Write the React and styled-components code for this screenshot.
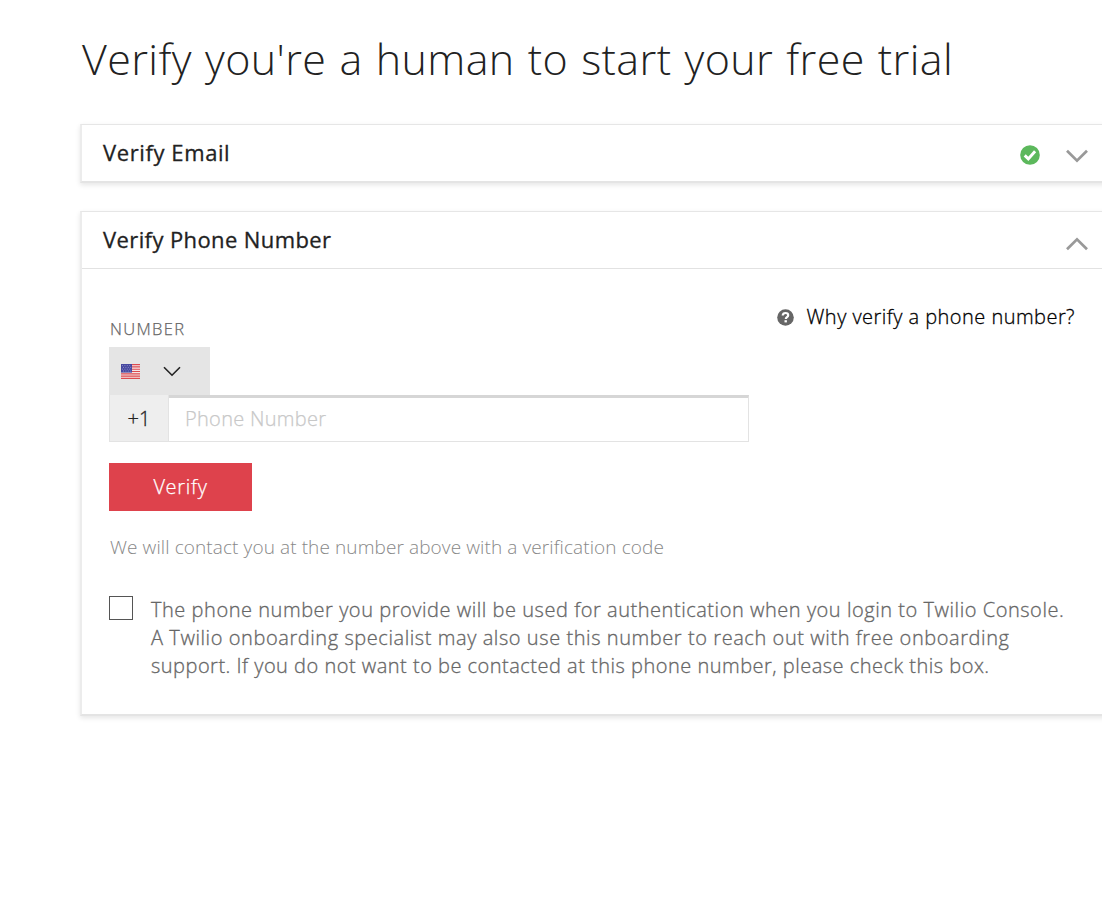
import React from "react";
import styled, { createGlobalStyle } from "styled-components";

const GlobalStyle = createGlobalStyle`
  * { box-sizing: border-box; }
  html, body { margin: 0; background: #fff; }
  body { font-family: "Open Sans", "Noto Sans", sans-serif; overflow: hidden; }
`;

const Page = styled.main`
  width: 1102px;
  height: 913px;
  padding: 29px 0 0 80px;
  overflow: hidden;
`;

const Title = styled.h1`
  margin: 0 0 35px 2px;
  height: 60px;
  font-size: 43px;
  line-height: 60px;
  font-weight: 300;
  letter-spacing: 0.4px;
  word-spacing: 1.5px;
  color: #222;
  white-space: nowrap;
`;

const Card = styled.section`
  width: 1050px;
  margin-bottom: 28px;
  border: 1px solid #e6e6e6;
  border-left-width: 2px;
  border-left-color: #ececec;
  border-bottom: 2px solid #e4e4e4;
  box-shadow: 0 2px 5px rgba(0, 0, 0, 0.1);
  background: #fff;
`;

const CardHeader = styled.header`
  display: flex;
  align-items: center;
  height: ${(p) => (p.$open ? 57 : 56)}px;
  padding: 0 41px 0 21px;
  border-bottom: ${(p) => (p.$open ? "1px solid #e2e2e2" : "0")};
`;

const CardTitle = styled.h2`
  flex: 1;
  margin: 0;
  padding-bottom: 2px;
  font-size: 22px;
  line-height: 30px;
  font-weight: 400;
  -webkit-text-stroke: 0.3px #222;
  letter-spacing: ${(p) => p.$track}px;
  color: #222;
`;

const HeaderIcons = styled.div`
  display: flex;
  align-items: center;
  gap: 26px;
  padding-top: ${(p) => p.$drop}px;
  svg { display: block; }
`;

const CardBody = styled.div`
  display: flex;
  justify-content: space-between;
  height: 445px;
  padding: 34px 55px 0 27px;
`;

const FormColumn = styled.form`
  width: 640px;
  flex: none;
`;

const FieldLabel = styled.label`
  display: block;
  height: 44px;
  padding: 14px 0 0 1px;
  font-size: 16.5px;
  line-height: 24px;
  font-weight: 300;
  -webkit-text-stroke: 0.25px #666;
  letter-spacing: 1.35px;
  color: #666;
`;

const CountrySelect = styled.div`
  display: flex;
  align-items: center;
  gap: 23px;
  width: 101px;
  height: 48px;
  padding-left: 12px;
  background: #e5e5e5;
  svg { display: block; }
`;

const PhoneRow = styled.div`
  display: flex;
  width: 640px;
  height: 47px;
`;

const DialCode = styled.span`
  width: 60px;
  border: 1px solid #e3e3e3;
  border-top: 0;
  background: #eee;
  font-size: 20px;
  line-height: 48px;
  font-weight: 300;
  -webkit-text-stroke: 0.3px #222;
  text-align: center;
  color: #222;
`;

const PhoneInput = styled.input`
  flex: 1;
  min-width: 0;
  padding: 0 0 3px 16px;
  border: 1px solid #e3e3e3;
  border-left: 0;
  border-top: 3px solid #d6d6d6;
  border-radius: 0;
  outline: 0;
  background: #fff;
  font-family: inherit;
  font-size: 20px;
  font-weight: 300;
  letter-spacing: 0.3px;
  &::placeholder {
    color: #c8c8c8;
    opacity: 1;
    -webkit-text-stroke: 0.25px #c8c8c8;
  }
`;

const VerifyButton = styled.button`
  display: block;
  width: 143px;
  height: 48px;
  margin-top: 21px;
  padding: 0 0 2px;
  border: 0;
  background: #de424c;
  color: #fff;
  font-family: inherit;
  font-size: 20px;
  font-weight: 300;
  -webkit-text-stroke: 0.25px #fff;
  letter-spacing: 0.7px;
`;

const Hint = styled.p`
  margin: 22px 0 0 1px;
  font-size: 19px;
  line-height: 28px;
  font-weight: 300;
  letter-spacing: 0.1px;
  color: #888;
  white-space: nowrap;
`;

const Consent = styled.div`
  display: flex;
  gap: 18px;
  margin-top: 35px;
  width: 990px;
`;

const CheckBox = styled.span`
  width: 24px;
  height: 24px;
  flex: none;
  border: 1px solid #555;
  background: #fff;
`;

const ConsentText = styled.p`
  margin: 0;
  font-size: 20px;
  line-height: 28px;
  font-weight: 300;
  -webkit-text-stroke: 0.3px #666;
  color: #666;
`;

const ConsentLine = styled.span`
  display: block;
  white-space: nowrap;
  letter-spacing: ${(p) => p.$track}px;
`;

const HelpLink = styled.a`
  display: flex;
  align-items: center;
  gap: 13px;
  height: 28px;
  margin-right: -1px;
  font-size: 20px;
  line-height: 28px;
  font-weight: 300;
  -webkit-text-stroke: 0.3px #000;
  letter-spacing: 0.46px;
  color: #000;
  white-space: nowrap;
`;

const Chevron = ({ up }) => (
  <svg width="22" height="14" viewBox="0 0 22 14" fill="none" stroke="#999" strokeWidth="2.7">
    <path d={up ? "M1 12.3 11 2.3 21 12.3" : "M1 1.7 11 11.7 21 1.7"} />
  </svg>
);

const CheckCircle = () => (
  <svg width="20" height="22" viewBox="0 0 20 22">
    <circle cx="10" cy="10" r="9.8" fill="#5cb85c" />
    <path d="M4.7 10.4 8.3 13.9 15.1 6.2" fill="none" stroke="#fff" strokeWidth="2.9" />
  </svg>
);

const HelpCircle = () => (
  <svg width="17" height="17" viewBox="0 0 17 17">
    <circle cx="8.5" cy="8.5" r="8.3" fill="#666" />
    <path d="M5.7 6.5C5.9 4.6 7.1 4 8.5 4c1.6 0 2.7.9 2.7 2.2 0 1.9-2.4 1.8-2.4 3.7" fill="none" stroke="#fff" strokeWidth="2.2" />
    <path d="M7.5 11.2h2.4v2.2H7.5z" fill="#fff" />
  </svg>
);

const Flag = () => (
  <svg width="19" height="15" viewBox="0 0 19 15">
    <path fill="#f6e6e6" d="M0 0h19v15H0z" />
    <path stroke="#dc4a50" strokeWidth="1.15" d="M0 .6h19M0 2.9h19M0 5.2h19M0 7.5h19M0 9.8h19M0 12.1h19M0 14.4h19" />
    <path fill="#4648a0" d="M0 0h11v8.6H0z" />
    <path stroke="#9a9bd0" strokeWidth=".8" strokeDasharray="1 1.4" d="M1 1.6h9.5M2 3.4h8.5M1 5.2h9.5M2 7h8.5" />
  </svg>
);

const SelectArrow = () => (
  <svg width="18" height="11" viewBox="0 0 18 11" fill="none" stroke="#222" strokeWidth="1.6">
    <path d="M1 1.2 9 9.2 17 1.2" />
  </svg>
);

export default function App() {
  return (
    <>
      <GlobalStyle />
      <Page>
        <Title>Verify you're a human to start your free trial</Title>
        <Card>
          <CardHeader>
            <CardTitle $track={0.6}>Verify Email</CardTitle>
            <HeaderIcons $drop={5}>
              <CheckCircle />
              <Chevron />
            </HeaderIcons>
          </CardHeader>
        </Card>
        <Card>
          <CardHeader $open>
            <CardTitle $track={0.4}>Verify Phone Number</CardTitle>
            <HeaderIcons $drop={8}>
              <Chevron up />
            </HeaderIcons>
          </CardHeader>
          <CardBody>
            <FormColumn>
              <FieldLabel>NUMBER</FieldLabel>
              <CountrySelect>
                <Flag />
                <SelectArrow />
              </CountrySelect>
              <PhoneRow>
                <DialCode>+1</DialCode>
                <PhoneInput placeholder="Phone Number" />
              </PhoneRow>
              <VerifyButton type="button">Verify</VerifyButton>
              <Hint>We will contact you at the number above with a verification code</Hint>
              <Consent>
                <CheckBox />
                <ConsentText>
                  <ConsentLine $track={0.535}>The phone number you provide will be used for authentication when you login to Twilio Console.</ConsentLine>
                  <ConsentLine $track={0.57}>A Twilio onboarding specialist may also use this number to reach out with free onboarding</ConsentLine>
                  <ConsentLine $track={0.49}>support. If you do not want to be contacted at this phone number, please check this box.</ConsentLine>
                </ConsentText>
              </Consent>
            </FormColumn>
            <HelpLink>
              <HelpCircle />
              Why verify a phone number?
            </HelpLink>
          </CardBody>
        </Card>
      </Page>
    </>
  );
}
